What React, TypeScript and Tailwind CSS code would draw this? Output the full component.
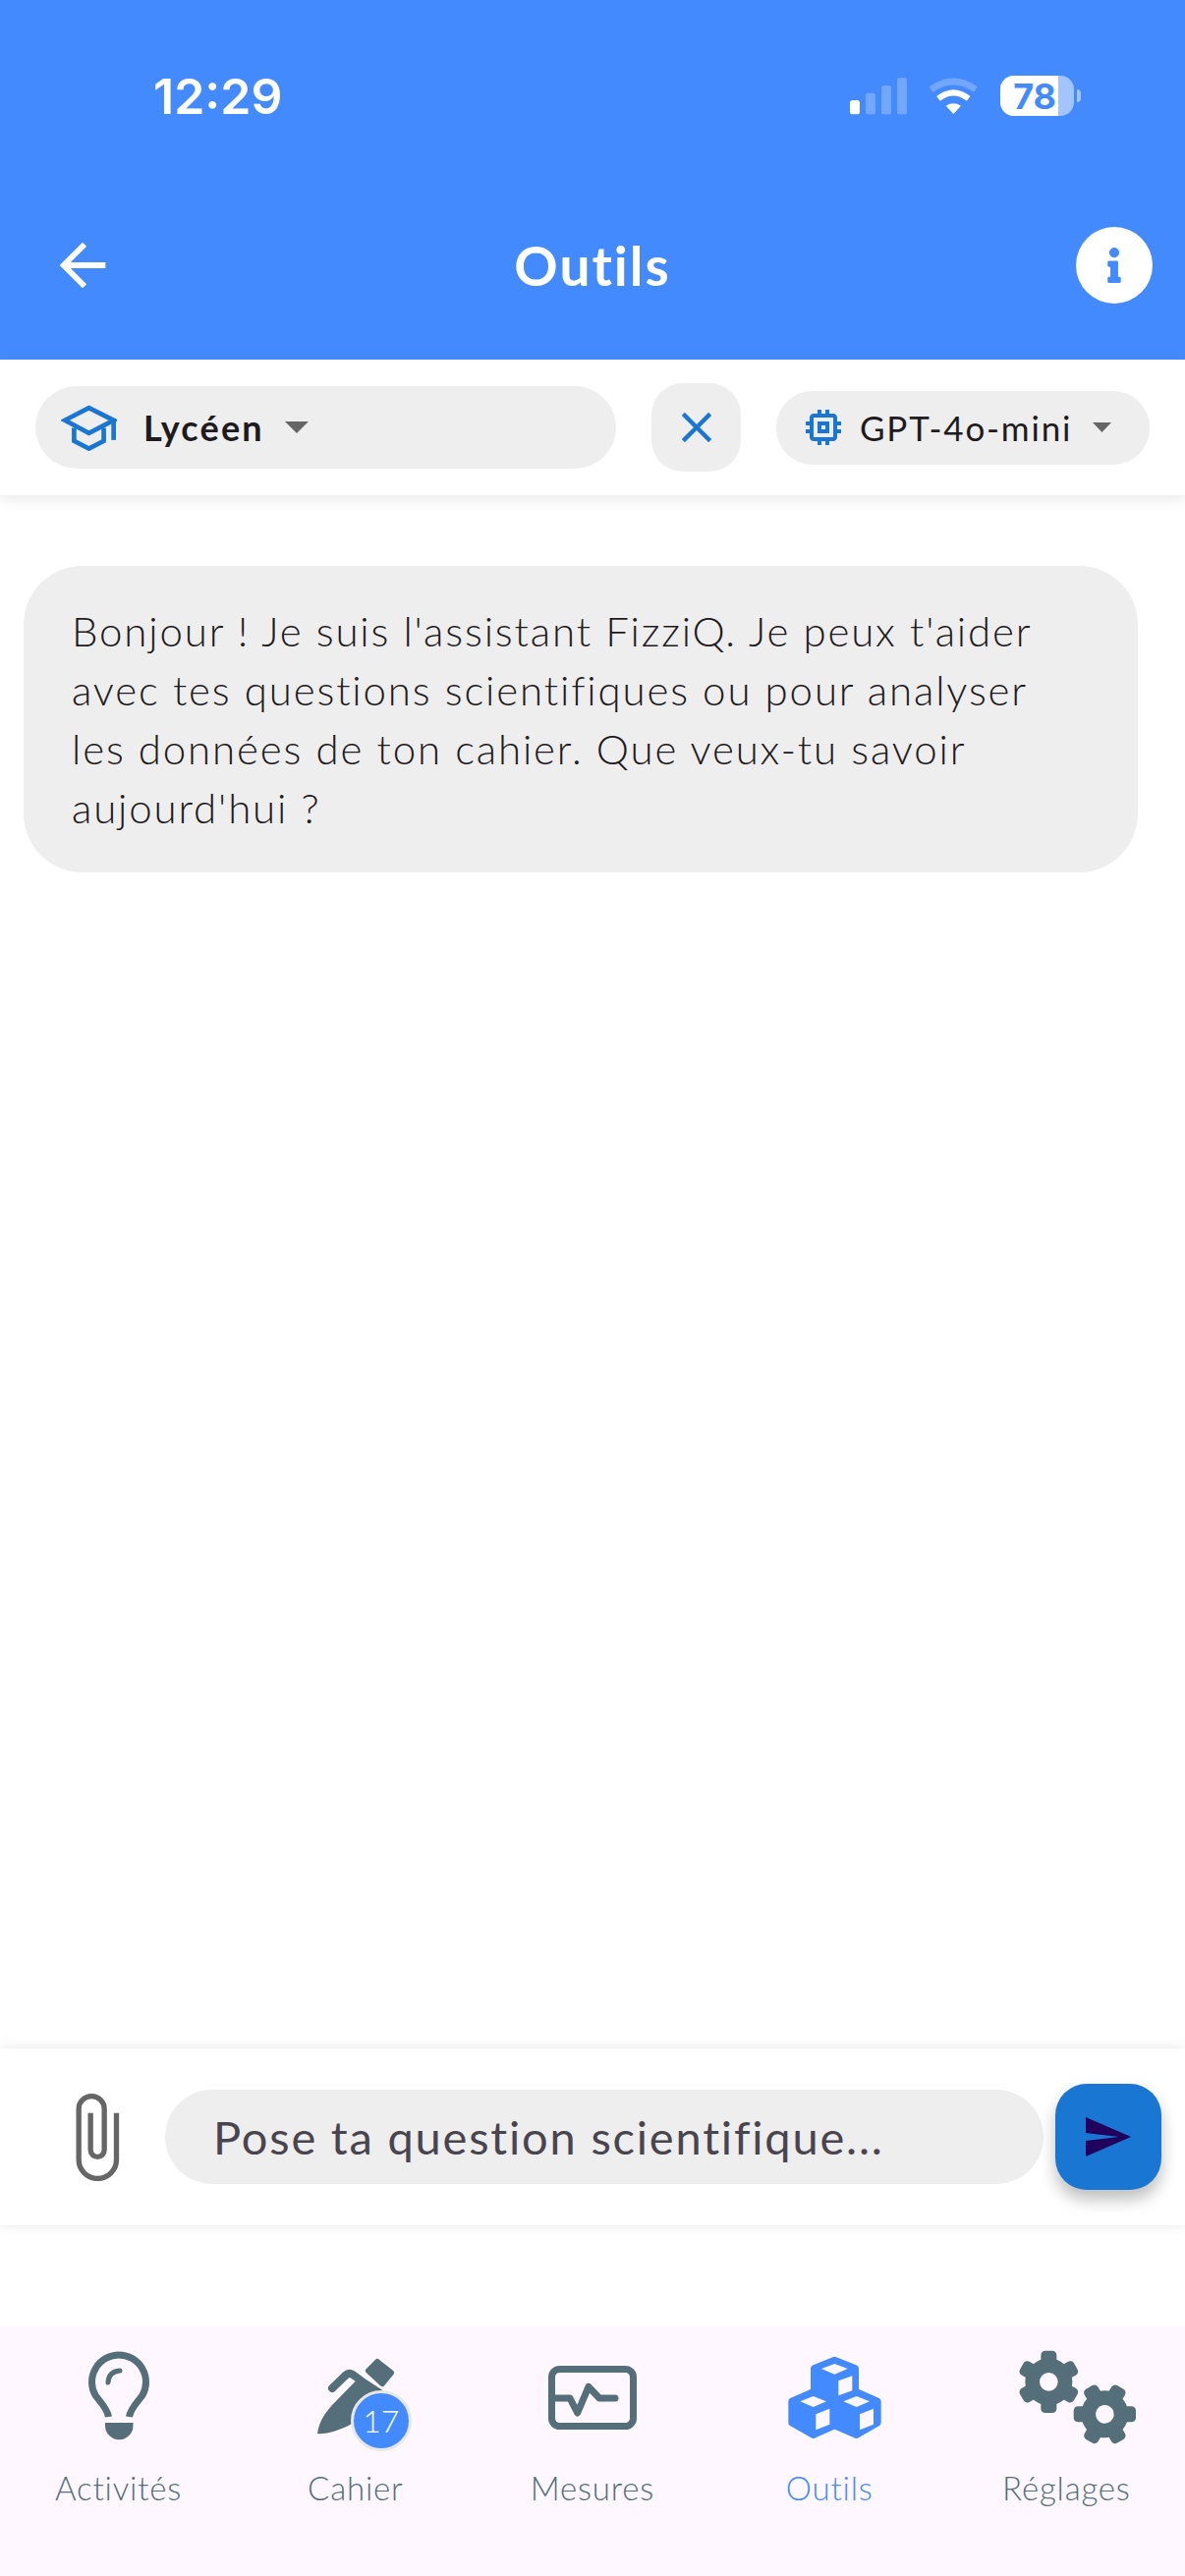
import { MdArrowBack, MdClose, MdOutlineMemory } from 'react-icons/md';
import { FaInfo } from 'react-icons/fa';

const GEAR_TEETH = [0, 60, 120, 180, 240, 300];

function Gear({ cx, cy, tilt }: { cx: number; cy: number; tilt: number }) {
  return (
    <g transform={`translate(${cx} ${cy}) rotate(${tilt})`}>
      <circle r="72" fill="#546E7A" />
      {GEAR_TEETH.map((a) => (
        <rect key={a} x="-24" y="-95" width="48" height="44" rx="13" fill="#546E7A" transform={`rotate(${a})`} />
      ))}
      <circle r="28" fill="#FEF7FF" />
    </g>
  );
}

function BulbIcon() {
  return (
    <svg width="120" height="94" viewBox="0 0 120 94" fill="none">
      <path d="M49.5 67C48 58 41 52 36 45A27.5 27.5 0 1 1 84 45C79 52 72 58 70.5 67" stroke="#546E7A" strokeWidth="7" />
      <path d="M46 73H74.5V76A14.2 14.2 0 0 1 46 76Z" fill="#546E7A" />
      <path d="M49 32Q49.5 21 61 20" stroke="#546E7A" strokeWidth="5" strokeLinecap="round" />
    </svg>
  );
}

function PenIcon() {
  return (
    <svg width="120" height="94" viewBox="0 0 120 94" fill="none">
      <path d="M21 84C23 70 31 60 39 52L60 30.5L66 26L87.5 40L56 74C40 83 26 85 21 84Z" fill="#546E7A" />
      <path d="M36 38L50 24.5Q53 21.5 57 24L64 29" stroke="#546E7A" strokeWidth="8" strokeLinecap="round" />
      <path d="M73 20L82 11L96 22L87 33Z" fill="#546E7A" stroke="#546E7A" strokeWidth="6" strokeLinejoin="round" />
    </svg>
  );
}

function MesuresIcon() {
  return (
    <svg width="120" height="94" viewBox="0 0 120 94" fill="none">
      <rect x="18.5" y="18.5" width="83" height="58" rx="8" stroke="#546E7A" strokeWidth="7" />
      <path d="M22 48H37L44.7 63L56 36.3L67 48H83" stroke="#546E7A" strokeWidth="7" strokeLinecap="round" strokeLinejoin="round" />
    </svg>
  );
}

function CubesIcon() {
  return (
    <svg width="120" height="94" viewBox="72 69 360 282">
      <polygon
        points="268,96 332,122 332,192 400,222 400,288 335,326 268,297 203,326 137,288 137,222 205,192 205,122"
        fill="#448AFF"
        stroke="#448AFF"
        strokeWidth="20"
        strokeLinejoin="round"
      />
      <g fill="#FEF7FF">
        <polygon points="268,108 308,123 268,140 228,123" />
        <polygon points="322,145 322,190 280,205 280,160" />
        <polygon points="203,207 243,223 203,240 163,223" />
        <polygon points="253,245 253,293 211,310 211,262" />
        <polygon points="335,207 375,223 335,240 295,223" />
        <polygon points="387,245 387,293 345,310 345,262" />
      </g>
    </svg>
  );
}

function GearsIcon() {
  return (
    <svg width="120" height="94" viewBox="795 69 360 282" className="overflow-visible">
      <Gear cx={922} cy={163} tilt={0} />
      <Gear cx={1093} cy={262} tilt={30} />
    </svg>
  );
}

const tabs = [
  { label: 'Activités', icon: <BulbIcon /> },
  { label: 'Cahier', icon: <PenIcon />, badge: '17' },
  { label: 'Mesures', icon: <MesuresIcon /> },
  { label: 'Outils', icon: <CubesIcon />, active: true },
  { label: 'Réglages', icon: <GearsIcon /> },
];

function StatusBar() {
  return (
    <div className="flex items-start h-[176px] pt-[71px] pl-[156px] pr-[106px] justify-between">
      <span className="text-[50px] leading-[54px] font-semibold text-white font-['Inter',sans-serif]">12:29</span>
      <div className="flex items-center gap-[8px] pt-[6px]">
        <svg width="150" height="41" viewBox="0 0 450 123">
          <g fill="#fff">
            <rect x="15" y="75" width="30" height="43" rx="8" />
            <g opacity="0.25">
              <rect x="63" y="53" width="30" height="65" rx="8" />
              <rect x="111" y="30" width="30" height="88" rx="8" />
              <rect x="159" y="7" width="30" height="111" rx="8" />
            </g>
            <path d="M308 92Q331 78 354 92L331 117Z" />
          </g>
          <path d="M285 70Q331 34 377 70" stroke="#fff" strokeWidth="18" fill="none" />
          <path d="M263 42Q331 -6 399 42" stroke="#fff" strokeWidth="20" fill="none" opacity="0.25" />
        </svg>
        <div className="flex items-center gap-[3px]">
          <div className="w-[75px] h-[41px] rounded-[14px] bg-[#A2C5FF] overflow-hidden">
            <div className="w-[59px] h-full bg-white flex items-center justify-end">
              <span className="text-[36px] leading-none font-bold text-[#448AFF] font-['Inter',sans-serif] mr-[2px]">78</span>
            </div>
          </div>
          <div className="w-[4px] h-[13px] rounded-r-full bg-[#A2C5FF]" />
        </div>
      </div>
    </div>
  );
}

function FilterBar() {
  return (
    <div className="relative z-10 h-[138px] bg-white flex items-center px-[36px] gap-[36px] shadow-[0_4px_14px_rgba(0,0,0,0.09)]">
      <div className="flex-1 h-[84px] rounded-full bg-[#EEEEEE] flex items-center pl-[26px]">
        <svg width="57" height="47" viewBox="125 125 170 140" fill="none" stroke="#1976D2" strokeWidth="14">
          <path d="M137 172L210 134L285 172L210 211Z" />
          <path d="M165 195V235L210 258L255 235V195" />
          <path d="M285 172V232" />
        </svg>
        <span className="ml-[27px] text-[36px] font-bold text-[#1D1B20] tracking-[2.2px]">Lycéen</span>
        <svg width="24" height="12" viewBox="0 0 24 12" className="ml-[21px]">
          <polygon points="0,0 24,0 12,12" fill="#666666" />
        </svg>
      </div>
      <button className="w-[91px] h-[90px] rounded-[32px] bg-[#EEEEEE] flex items-center justify-center">
        <MdClose size={52} color="#1976D2" />
      </button>
      <div className="w-[380px] h-[75px] rounded-[37px] bg-[#EEEEEE] flex items-center pl-[24px]">
        <MdOutlineMemory size={48} color="#1976D2" />
        <span className="ml-[13px] text-[35px] font-normal text-[#1D1B20] tracking-[1.8px]">GPT-4o-mini</span>
        <svg width="19" height="10" viewBox="0 0 19 10" className="ml-[21px]">
          <polygon points="0,0 19,0 9.5,10" fill="#666666" />
        </svg>
      </div>
    </div>
  );
}

function InputBar() {
  return (
    <div className="relative z-10 h-[180px] bg-white flex items-center pl-[76px] shadow-[0_0_12px_rgba(0,0,0,0.1)]">
      <svg width="47" height="90" viewBox="135 60 140 270" fill="none" stroke="#666666" strokeWidth="16">
        <path d="M183 122V235A21 21 0 0 0 225 235V110A39 39 0 0 0 147 110V265A57 57 0 0 0 262 265V122" />
      </svg>
      <div className="ml-[45px] w-[894px] h-[96px] rounded-full bg-[#EEEEEE] flex items-center pl-[49px] text-[47px] text-[#49454F] tracking-[1.8px]">
        Pose ta question scientifique...
      </div>
      <button className="ml-[12px] w-[108px] h-[108px] rounded-[32px] bg-[#1976D2] flex items-center justify-center shadow-[0_10px_16px_rgba(0,0,0,0.25)]">
        <svg width="46" height="40" viewBox="0 0 46 40">
          <polygon points="0,0 46,20 0,40 0,24 34,20 0,16" fill="#21005D" />
        </svg>
      </button>
    </div>
  );
}

export default function App() {
  return (
    <div className="w-[1206px] h-[2622px] flex flex-col bg-white overflow-hidden font-['Lato',sans-serif]">
      <header className="h-[366px] bg-[#448AFF] text-white">
        <StatusBar />
        <div className="grid grid-cols-[1fr_auto_1fr] items-center px-[33px] h-[78px] mt-[55px]">
          <MdArrowBack size={70} className="ml-[16px]" />
          <h1 className="text-[55px] leading-none font-bold tracking-[2px]">Outils</h1>
          <div className="justify-self-end w-[78px] h-[78px] rounded-full bg-white flex items-center justify-center">
            <FaInfo size={36} color="#448AFF" />
          </div>
        </div>
      </header>

      <FilterBar />

      <main className="flex-1 pt-[72px] pl-[24px]">
        <div className="w-[1134px] rounded-[60px] bg-[#EEEEEE] pl-[49px] pr-[55px] py-[36px] text-[42px] leading-[60px] font-light text-[#1D1B20] tracking-[1.85px]">
          Bonjour ! Je suis l'assistant FizziQ. Je peux t'aider avec tes questions scientifiques ou pour analyser les données de ton cahier. Que veux-tu savoir aujourd'hui ?
        </div>
      </main>

      <InputBar />

      <div className="h-[103px] bg-white" />

      <nav className="h-[254px] bg-[#FEF7FF] grid grid-cols-5">
        {tabs.map((tab) => (
          <div key={tab.label} className="flex flex-col items-center pt-[25px]">
            <div className="relative w-[120px] h-[94px]">
              {tab.icon}
              {tab.badge && (
                <span className="absolute left-[55px] top-[40px] w-[62px] h-[62px] rounded-full bg-[#448AFF] border-[3px] border-[#E8E8E8] flex items-center justify-center text-[32px] font-light text-white">
                  {tab.badge}
                </span>
              )}
            </div>
            <span className={`mt-[23px] text-[33px] leading-[44px] font-light tracking-[0.8px] ${tab.active ? 'text-[#448AFF]' : 'text-[#546E7A]'}`}>
              {tab.label}
            </span>
          </div>
        ))}
      </nav>
    </div>
  );
}
